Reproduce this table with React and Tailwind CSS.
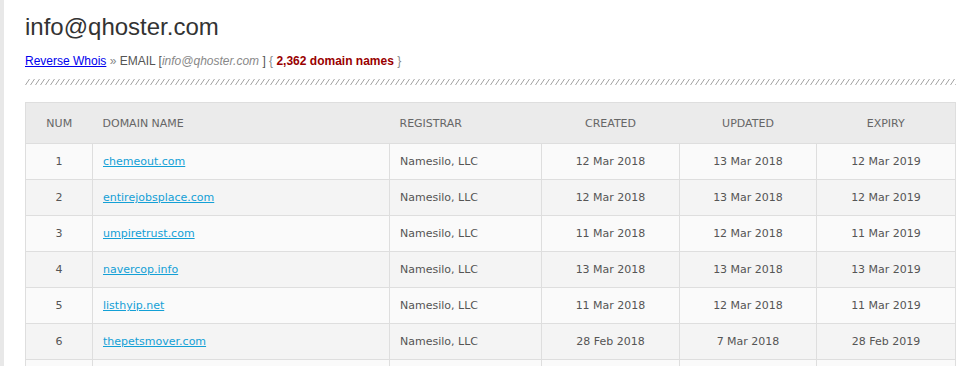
import React from 'react';

const rows = [
  ['1', 'chemeout.com', 'Namesilo, LLC', '12 Mar 2018', '13 Mar 2018', '12 Mar 2019'],
  ['2', 'entirejobsplace.com', 'Namesilo, LLC', '12 Mar 2018', '13 Mar 2018', '12 Mar 2019'],
  ['3', 'umpiretrust.com', 'Namesilo, LLC', '11 Mar 2018', '12 Mar 2018', '11 Mar 2019'],
  ['4', 'navercop.info', 'Namesilo, LLC', '13 Mar 2018', '13 Mar 2018', '13 Mar 2019'],
  ['5', 'listhyip.net', 'Namesilo, LLC', '11 Mar 2018', '12 Mar 2018', '11 Mar 2019'],
  ['6', 'thepetsmover.com', 'Namesilo, LLC', '28 Feb 2018', '7 Mar 2018', '28 Feb 2019'],
];

function Hatch() {
  return (
    <svg className="block w-full h-[6px]" aria-hidden="true">
      <defs>
        <pattern id="hatch" width="5" height="6" patternUnits="userSpaceOnUse">
          <line x1="0.5" y1="6" x2="4.5" y2="0" stroke="#a3a3a3" strokeWidth="1" />
        </pattern>
      </defs>
      <rect width="100%" height="6" fill="url(#hatch)" />
    </svg>
  );
}

export default function App() {
  return (
    <div className="flex h-[366px] overflow-hidden bg-white">
      <div className="w-[4px] shrink-0 bg-[#e8e8e8]" />
      <div className="flex-1 pl-[21px] pr-[19px] pt-[12px]">
        <h1 className="font-['Liberation_Sans',Arial,sans-serif] text-[24px] leading-[30px] text-[#333]">
          info@qhoster.com
        </h1>
        <div className="mt-[11px] font-['Liberation_Sans',Arial,sans-serif] text-[12px] leading-[16px] text-[#555]">
          <a href="#" className="text-[#0000ee] underline">Reverse Whois</a>
          <span className="text-[#888]"> » </span>
          EMAIL [<i className="text-[#888]">info@qhoster.com</i> ]
          <span className="text-[#888]"> {'{'} </span>
          <b className="text-[#990000]">2,362 domain names</b>
          <span className="text-[#888]"> {'}'}</span>
        </div>
        <div className="mt-[10px]">
          <Hatch />
        </div>
        <table className="mt-[17px] w-[930px] table-fixed border-collapse border border-[#dedede] font-['DejaVu_Sans',Verdana,sans-serif] text-[11px] text-[#555]">
          <colgroup>
            <col className="w-[67px]" />
            <col className="w-[297px]" />
            <col className="w-[152px]" />
            <col className="w-[138px]" />
            <col className="w-[137px]" />
            <col className="w-[139px]" />
          </colgroup>
          <thead>
            <tr className="h-[41px] bg-[#ebebeb] text-[#666] uppercase">
              <th className="pt-[2px] font-normal text-center">Num</th>
              <th className="pt-[2px] font-normal text-left pl-[10px]">Domain Name</th>
              <th className="pt-[2px] font-normal text-left pl-[10px]">Registrar</th>
              <th className="pt-[2px] font-normal text-center">Created</th>
              <th className="pt-[2px] font-normal text-center">Updated</th>
              <th className="pt-[2px] font-normal text-center">Expiry</th>
            </tr>
          </thead>
          <tbody>
            {rows.map((r, i) => (
              <tr key={r[0]} className={i % 2 === 0 ? 'h-[36px] bg-[#fafafa]' : 'h-[36px] bg-[#f4f4f4]'}>
                <td className="pt-[2px] border border-[#dedede] text-center">{r[0]}</td>
                <td className="pt-[2px] border border-[#dedede] pl-[10px]">
                  <a href="#" className="text-[#13a0d6] underline">{r[1]}</a>
                </td>
                <td className="pt-[2px] border border-[#dedede] pl-[10px]">{r[2]}</td>
                <td className="pt-[2px] border border-[#dedede] text-center">{r[3]}</td>
                <td className="pt-[2px] border border-[#dedede] text-center">{r[4]}</td>
                <td className="pt-[2px] border border-[#dedede] text-center">{r[5]}</td>
              </tr>
            ))}
            <tr className="h-[36px] bg-[#fafafa]">
              <td className="border border-[#dedede]" />
              <td className="border border-[#dedede]" />
              <td className="border border-[#dedede]" />
              <td className="border border-[#dedede]" />
              <td className="border border-[#dedede]" />
              <td className="border border-[#dedede]" />
            </tr>
          </tbody>
        </table>
      </div>
    </div>
  );
}
